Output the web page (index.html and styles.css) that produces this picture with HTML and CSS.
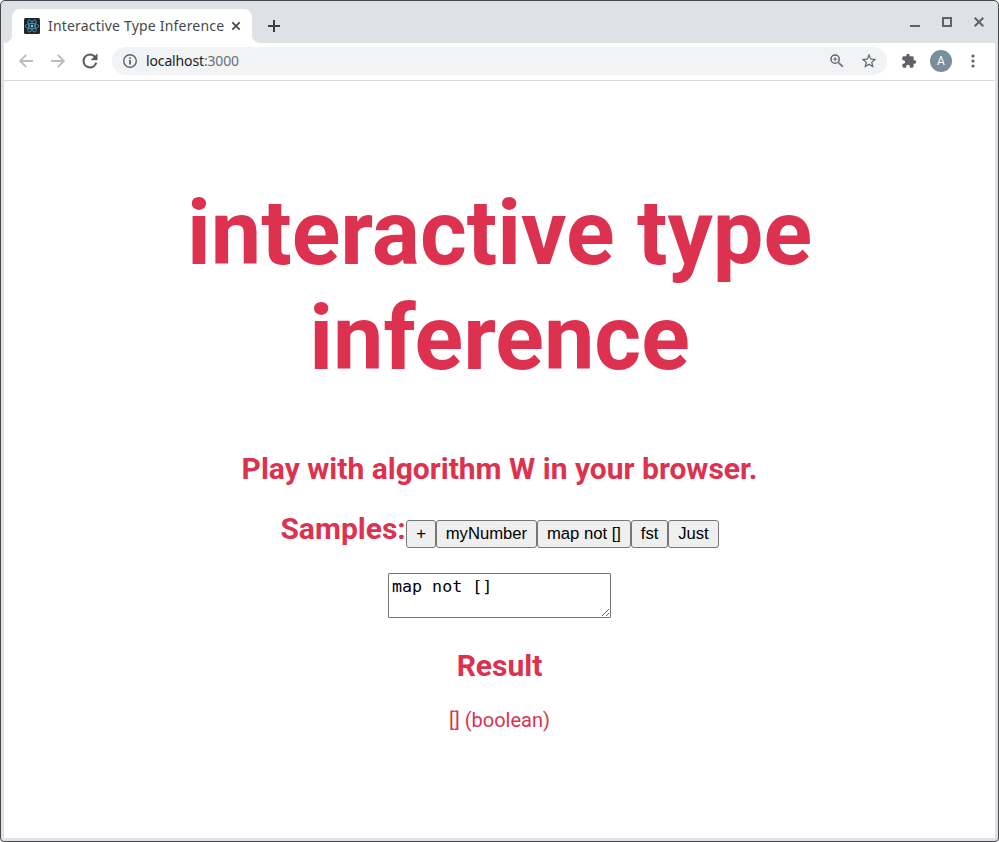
FILE: index.html
```html
<!DOCTYPE html>
<html lang="en">
<head>
<meta charset="utf-8">
<title>Interactive Type Inference</title>
<link rel="stylesheet" href="styles.css">
</head>
<body>
<div class="window">
  <header class="tabstrip">
    <div class="tab">
      <svg class="favicon" width="16" height="16" viewBox="0 0 16 16"><rect width="16" height="16" rx="1.5" fill="#20232a"/><g fill="none" stroke="#4a9db3" stroke-width=".85"><ellipse cx="8" cy="8" rx="6.7" ry="2.6"/><ellipse cx="8" cy="8" rx="6.7" ry="2.6" transform="rotate(60 8 8)"/><ellipse cx="8" cy="8" rx="6.7" ry="2.6" transform="rotate(120 8 8)"/></g><circle cx="8" cy="8" r="1.3" fill="#61dafb"/></svg>
      <span class="tab-title">Interactive Type Inference</span>
      <svg class="tab-close" width="10" height="10" viewBox="0 0 10 10"><path d="M1.3 1.3l7.4 7.4M8.7 1.3L1.3 8.7" stroke="#45494d" stroke-width="1.7"/></svg>
    </div>
    <svg class="new-tab" width="12" height="12" viewBox="0 0 12 12"><path d="M6 0v12M0 6h12" stroke="#3c4043" stroke-width="2"/></svg>
    <div class="controls">
      <svg width="12" height="12" viewBox="0 0 12 12"><path d="M1 10h10" stroke="#5f6368" stroke-width="2"/></svg>
      <svg width="12" height="12" viewBox="0 0 12 12"><path d="M2 2h8v8H2z" fill="none" stroke="#5f6368" stroke-width="2"/></svg>
      <svg width="12" height="12" viewBox="0 0 12 12"><path d="M1.700 1.700l8.600 8.600M10.300 1.700l-8.600 8.600" stroke="#5f6368" stroke-width="2"/></svg>
    </div>
  </header>
  <nav class="toolbar">
    <svg class="back" width="16" height="16" viewBox="0 0 16 16"><path d="M15 8H2.500M8.200 1.900L2.100 8l6.100 6.100" fill="none" stroke="#babcbe" stroke-width="1.9"/></svg>
    <svg class="forward" width="16" height="16" viewBox="0 0 16 16"><path d="M1 8h12.500M7.800 1.900L13.900 8l-6.100 6.100" fill="none" stroke="#babcbe" stroke-width="1.9"/></svg>
    <svg class="reload" width="22" height="22" viewBox="0 0 24 24"><path d="M17.65 6.35A7.96 7.96 0 0 0 12 4a8 8 0 1 0 7.73 10h-2.08A6 6 0 1 1 12 6c1.66 0 3.14.69 4.22 1.78L13 11h7V4z" fill="#54585d" stroke="#54585d" stroke-width=".3"/></svg>
    <div class="omnibox">
      <svg class="info" width="16" height="16" viewBox="0 0 16 16"><circle cx="8" cy="8" r="6.3" fill="none" stroke="#5f6368" stroke-width="1.4"/><path d="M8 4.2v1.600M8 7v4.600" stroke="#5f6368" stroke-width="1.8"/></svg>
      <span class="url">localhost<span class="port">:3000</span></span>
      <svg class="zoom" width="18" height="18" viewBox="0 0 24 24" fill="#5f6368"><path d="M15.5 14h-.79l-.28-.27A6.47 6.47 0 0 0 16 9.5 6.5 6.5 0 1 0 9.5 16c1.61 0 3.09-.59 4.23-1.57l.27.28v.79l5 4.99L20.49 19zm-6 0a4.5 4.5 0 1 1 0-9 4.5 4.5 0 0 1 0 9z"/><path d="M12 10h-2v2H9v-2H7V9h2V7h1v2h2z" stroke="#5f6368" stroke-width=".3"/></svg>
      <svg class="star" width="18" height="18" viewBox="0 0 24 24" fill="#5f6368"><path d="M22 9.24l-7.19-.62L12 2 9.19 8.63 2 9.24l5.46 4.73L5.82 21 12 17.27 18.18 21l-1.63-7.03zM12 15.4l-3.76 2.27 1-4.28-3.32-2.88 4.38-.38L12 6.1l1.71 4.04 4.38.38-3.32 2.88 1 4.28z"/></svg>
    </div>
    <svg class="ext" width="16" height="16" viewBox="0 0 24 24" fill="#5f6368"><path d="M20.5 11H19V7a2 2 0 0 0-2-2h-4V3.500a2.500 2.500 0 0 0-5 0V5H4a2 2 0 0 0-2 2v3.800h1.500a2.700 2.700 0 0 1 0 5.400H2V20a2 2 0 0 0 2 2h3.800v-1.500a2.700 2.700 0 0 1 5.400 0V22H17a2 2 0 0 0 2-2v-4h1.500a2.500 2.500 0 0 0 0-5z"/></svg>
    <span class="avatar">A</span>
    <svg class="menu" width="4" height="16" viewBox="0 0 4 16" fill="#5f6368"><circle cx="2" cy="3" r="1.6"/><circle cx="2" cy="8" r="1.6"/><circle cx="2" cy="13" r="1.6"/></svg>
  </nav>
  <main class="page">
    <h1>interactive type inference</h1>
    <h2 class="tagline">Play with algorithm W in your browser.</h2>
    <div class="samples"><h2>Samples:</h2><button>+</button><button>myNumber</button><button>map not []</button><button>fst</button><button>Just</button></div>
    <textarea spellcheck="false">map not []</textarea>
    <h2 class="result">Result</h2>
    <p class="type">[] (boolean)</p>
  </main>
</div>
</body>
</html>
```
FILE: styles.css
```css
* { box-sizing: border-box; }
html { background: #fff; }
body { margin: 0; height: 842px; overflow: hidden; }
svg { display: block; flex: none; }
.window {
  height: 842px;
  border: 1px solid #4a474b;
  border-radius: 5px 5px 4px 4px;
  background: #dee1e6;
  padding: 0 3px 3px;
  display: flex;
  flex-direction: column;
}
.tabstrip {
  height: 42px;
  flex: none;
  display: flex;
  align-items: flex-end;
  font-family: "Noto Sans", sans-serif;
}
.tab {
  position: relative;
  width: 240px;
  height: 34px;
  margin-left: 8px;
  padding: 0 11px 0 12px;
  display: flex;
  align-items: center;
  background: #fff;
  border-radius: 8px 8px 0 0;
}
.tab::before, .tab::after {
  content: "";
  position: absolute;
  bottom: 0;
  width: 8px;
  height: 8px;
}
.tab::before { left: -8px; background: radial-gradient(circle at 0 0, transparent 7.5px, #fff 8.5px); }
.tab::after { right: -8px; background: radial-gradient(circle at 100% 0, transparent 7.5px, #fff 8.5px); }
.tab-title {
  margin-left: 8px;
  font-size: 14px;
  line-height: 20px;
  letter-spacing: 0.19px;
  white-space: nowrap;
  color: #45494d;
}
.tab-close { margin-left: auto; }
.new-tab { margin: 0 0 11px 16px; }
.controls { display: flex; gap: 20px; margin: 0 10px 15px auto; }
.toolbar {
  height: 38px;
  flex: none;
  display: flex;
  align-items: center;
  background: #fff;
  border-bottom: 1px solid #d9dbe0;
  padding: 0 20px 1px 14px;
}
.forward { margin-left: 16px; }
.reload { margin-left: 13px; }
.omnibox {
  width: 775px;
  height: 28px;
  margin-left: 11px;
  padding: 0 9px 0 10px;
  display: flex;
  align-items: center;
  background: #f1f3f4;
  border-radius: 14px;
}
.url {
  margin-left: 8px;
  font: 14px/20px "Noto Sans", sans-serif;
  letter-spacing: -0.14px;
  color: #202124;
}
.port { color: #6b6f74; }
.zoom { margin-left: auto; }
.star { margin-left: 14px; }
.ext { margin-left: 14px; }
.avatar {
  width: 22px;
  height: 22px;
  margin-left: 13px;
  border-radius: 50%;
  background: #78909c;
  color: #fff;
  font: 12px/22px Roboto, sans-serif;
  text-align: center;
}
.menu { margin-left: auto; }
.page {
  flex: 1;
  background: #fff;
  color: #dc3250;
  font-family: Roboto, sans-serif;
  display: flex;
  flex-direction: column;
  align-items: center;
}
h1, h2, p { margin: 0; text-align: center; }
h1 {
  width: 800px;
  margin-top: 100px;
  font-size: 90px;
  line-height: 105px;
}
h2 { font-size: 30px; line-height: 35px; }
.tagline { margin-top: 60px; }
.samples {
  margin-top: 25px;
  display: flex;
  align-items: baseline;
}
.samples h2 { margin-right: 0.5px; }
button {
  height: 28px;
  padding: 1px 8.9px;
  border: 1px solid #767676;
  border-radius: 3px;
  background: #efefef;
  color: #000;
  font: 16.667px "Liberation Sans", Arial, sans-serif;
}
textarea {
  width: 223px;
  height: 45px;
  margin: 25px 0 0;
  padding: 3px;
  border: 1px solid #767676;
  border-radius: 1px;
  background: #fff;
  color: #000;
  font: 16.667px/20px "DejaVu Sans Mono", monospace;
}
.result { margin-top: 30px; }
.type { margin-top: 25px; font-size: 20px; line-height: 24px; }
```
